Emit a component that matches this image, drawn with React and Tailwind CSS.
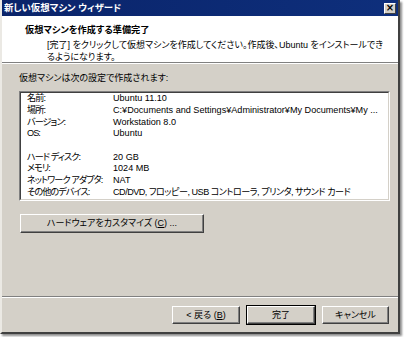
import React from "react";

const basicRows = [
  ["名前:", "Ubuntu 11.10"],
  ["場所:", "C:¥Documents and Settings¥Administrator¥My Documents¥My ..."],
  ["バージョン:", "Workstation 8.0"],
  ["OS:", "Ubuntu"],
];

const hwRows = [
  ["ハード ディスク:", "20 GB"],
  ["メモリ:", "1024 MB"],
  ["ネットワーク アダプタ:", "NAT"],
  ["その他のデバイス:", "CD/DVD, フロッピー, USB コントローラ, プリンタ, サウンド カード", true],
];

// latin from Liberation Sans, kana/kanji fall back to Noto CJK JP (proportional)
const font =
  "font-['Liberation_Sans','Noto_Sans_CJK_JP',sans-serif] [font-feature-settings:'palt']";

const Button = ({ children, isDefault, className = "" }) => (
  <div
    className={`${className} ${
      isDefault ? "border border-black" : "border border-transparent"
    }`}
  >
    <button
      type="button"
      className="w-full h-full flex items-center justify-center bg-[#d4d0c8] border border-t-white border-l-white border-r-[#404040] border-b-[#404040] shadow-[inset_-1px_-1px_0_#808080] text-[9px] leading-none text-black whitespace-nowrap"
    >
      {children}
    </button>
  </div>
);

const InfoRow = ({ label, value, tight }) => (
  <div className="flex h-[11.7px] items-center leading-none whitespace-nowrap">
    <span className="w-[86px] shrink-0 tracking-[-0.9px]">{label}</span>
    <span className={tight ? "tracking-[-0.5px]" : ""}>{value}</span>
  </div>
);

export default function App() {
  return (
    <div className={`w-[404px] h-[337px] bg-white ${font}`}>
      <div className="w-[400px] h-[334px] flex flex-col bg-[#d4d0c8] border-l-2 border-l-[#ebe9e4] border-r-2 border-r-[#404040] border-b-2 border-b-[#404040] shadow-[2px_2px_2px_rgba(0,0,0,0.45)]">
        {/* title bar */}
        <div className="h-[16px] shrink-0 flex items-center justify-between pl-[2px] pr-[2px] bg-linear-to-r from-[#0a246a] to-[#0e2f7c]">
          <span className="text-white font-bold text-[9.4px] leading-none">
            新しい仮想マシン ウィザード
          </span>
          <span className="w-[12px] h-[11px] flex items-center justify-center bg-[#d4d0c8] border border-t-white border-l-white border-r-[#404040] border-b-[#404040] text-[10px] font-bold leading-none text-black font-['DejaVu_Sans',sans-serif]">
            ×
          </span>
        </div>

        {/* header */}
        <div className="h-[46px] shrink-0 bg-white pl-[23px] pt-[9px] text-black">
          <div className="font-bold text-[9.2px] leading-[10px]">
            仮想マシンを作成する準備完了
          </div>
          <div className="mt-[4px] pl-[22px] text-[9px] leading-[12px]">
            <div className="whitespace-nowrap">
              [完了] をクリックして仮想マシンを作成してください。作成後、Ubuntu をインストールでき
            </div>
            <div>るようになります。</div>
          </div>
        </div>
        <div className="h-[2px] shrink-0 border-t border-t-[#808080] border-b border-b-white" />

        {/* body */}
        <div className="flex-1 flex flex-col px-[17px] pt-[8px] text-black text-[9px]">
          <div className="leading-[12px]">仮想マシンは次の設定で作成されます:</div>
          <div className="mt-[7px] w-[371px] h-[110px] bg-white border border-t-[#808080] border-l-[#808080] border-r-white border-b-white">
            <div className="h-full border border-t-[#404040] border-l-[#404040] border-r-[#d4d0c8] border-b-[#d4d0c8] pl-[6px] overflow-hidden text-[9.1px]">
              {basicRows.map(([l, v]) => (
                <InfoRow key={l} label={l} value={v} />
              ))}
              <div className="h-[11.7px]" />
              {hwRows.map(([l, v, t]) => (
                <InfoRow key={l} label={l} value={v} tight={t} />
              ))}
            </div>
          </div>
          <Button className="mt-[12px] w-[186px] h-[21px]">
            ハードウェアをカスタマイズ (<span className="underline">C</span>) ...
          </Button>
        </div>

        {/* footer */}
        <div className="h-[2px] shrink-0 border-t border-t-[#808080] border-b border-b-white" />
        <div className="h-[34px] shrink-0 flex justify-end items-start gap-[5px] pt-[7px] pr-[8px]">
          <Button className="w-[70px] h-[20px]">
            &lt; 戻る (<span className="underline">B</span>)
          </Button>
          <Button isDefault className="w-[70px] h-[20px]">
            完了
          </Button>
          <Button className="w-[69px] h-[20px]">キャンセル</Button>
        </div>
      </div>
    </div>
  );
}
